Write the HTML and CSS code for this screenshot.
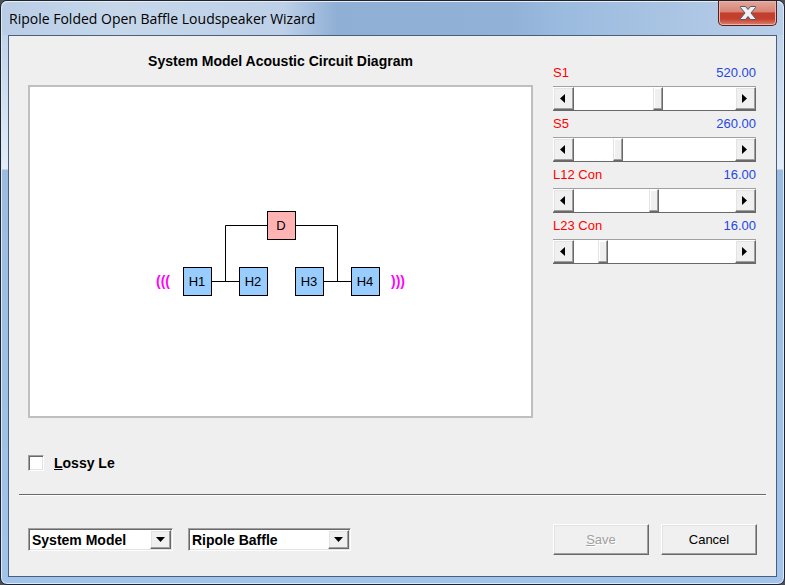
FILE: index.html
```html
<!DOCTYPE html>
<html lang="en">
<head>
  <meta charset="UTF-8">
  <title>Ripole Folded Open Baffle Loudspeaker Wizard</title>
  <link rel="stylesheet" href="styles.css">
</head>
<body>
  <div class="window">
    <header class="titlebar">
      <h1 class="title">Ripole Folded Open Baffle Loudspeaker Wizard</h1>
      <button class="close" type="button" aria-label="Close">
        <svg width="16" height="14" viewBox="0 0 16 14">
          <path d="M.5.5h5L8 3.500 10.500.5h5v1L11 7l4.500 5.500v1h-5L8 10.500l-2.500 3h-5v-1L5 7 .5 1.500z" fill="#f0f0f0" stroke="#54586b"/>
        </svg>
      </button>
    </header>
    <form class="client">
      <div class="main">
        <section class="model">
          <h2 class="heading">System Model Acoustic Circuit Diagram</h2>
          <div class="diagram">
            <svg class="circuit" width="262" height="88" viewBox="0 0 262 88">
              <path class="wire" d="M61.500 73.500h28M173.500 73.500h28M75.500 73.500v-56h42M145.500 17.500h42v56"/>
              <rect class="driver" x="117.500" y="3.500" width="28" height="28"/>
              <rect class="horn" x="33.500" y="59.500" width="28" height="28"/>
              <rect class="horn" x="89.500" y="59.500" width="28" height="28"/>
              <rect class="horn" x="145.500" y="59.500" width="28" height="28"/>
              <rect class="horn" x="201.500" y="59.500" width="28" height="28"/>
              <text x="131" y="22">D</text>
              <text x="47" y="78">H1</text>
              <text x="103" y="78">H2</text>
              <text x="159" y="78">H3</text>
              <text x="215" y="78">H4</text>
              <text class="wave" x="13" y="78">(((</text>
              <text class="wave" x="248" y="78">)))</text>
            </svg>
          </div>
        </section>
        <section class="params">
          <div class="param">
            <label class="name" for="s1">S1</label>
            <output class="value" for="s1">520.00</output>
            <div class="scrollbar">
              <button class="step" type="button" aria-label="Decrease S1"><svg width="5" height="9" viewBox="0 0 5 9"><path d="M5 0v9L0 4.500z"/></svg></button>
              <input class="range" type="range" id="s1" min="0" max="1000" value="520">
              <button class="step" type="button" aria-label="Increase S1"><svg width="5" height="9" viewBox="0 0 5 9"><path d="M0 0v9l5-4.500z"/></svg></button>
            </div>
          </div>
          <div class="param">
            <label class="name" for="s5">S5</label>
            <output class="value" for="s5">260.00</output>
            <div class="scrollbar">
              <button class="step" type="button" aria-label="Decrease S5"><svg width="5" height="9" viewBox="0 0 5 9"><path d="M5 0v9L0 4.500z"/></svg></button>
              <input class="range" type="range" id="s5" min="0" max="1000" value="260">
              <button class="step" type="button" aria-label="Increase S5"><svg width="5" height="9" viewBox="0 0 5 9"><path d="M0 0v9l5-4.500z"/></svg></button>
            </div>
          </div>
          <div class="param">
            <label class="name" for="l12">L12 Con</label>
            <output class="value" for="l12">16.00</output>
            <div class="scrollbar">
              <button class="step" type="button" aria-label="Decrease L12"><svg width="5" height="9" viewBox="0 0 5 9"><path d="M5 0v9L0 4.500z"/></svg></button>
              <input class="range" type="range" id="l12" min="0" max="1000" value="495">
              <button class="step" type="button" aria-label="Increase L12"><svg width="5" height="9" viewBox="0 0 5 9"><path d="M0 0v9l5-4.500z"/></svg></button>
            </div>
          </div>
          <div class="param">
            <label class="name" for="l23">L23 Con</label>
            <output class="value" for="l23">16.00</output>
            <div class="scrollbar">
              <button class="step" type="button" aria-label="Decrease L23"><svg width="5" height="9" viewBox="0 0 5 9"><path d="M5 0v9L0 4.500z"/></svg></button>
              <input class="range" type="range" id="l23" min="0" max="1000" value="160">
              <button class="step" type="button" aria-label="Increase L23"><svg width="5" height="9" viewBox="0 0 5 9"><path d="M0 0v9l5-4.500z"/></svg></button>
            </div>
          </div>
        </section>
      </div>
      <div class="options">
        <input class="check" type="checkbox" id="lossy">
        <label for="lossy"><u>L</u>ossy Le</label>
      </div>
      <hr class="divider">
      <footer class="footer">
        <div class="combo combo-view">
          <select class="select" aria-label="View">
            <option>System Model</option>
          </select>
          <span class="arrow"><svg width="9" height="5" viewBox="0 0 9 5"><path d="M0 0h9L4.500 5z"/></svg></span>
        </div>
        <div class="combo combo-type">
          <select class="select" aria-label="Baffle type">
            <option>Ripole Baffle</option>
          </select>
          <span class="arrow"><svg width="9" height="5" viewBox="0 0 9 5"><path d="M0 0h9L4.500 5z"/></svg></span>
        </div>
        <div class="actions">
          <button class="btn" type="submit" disabled><span><u>S</u>ave</span></button>
          <button class="btn" type="button">Cancel</button>
        </div>
      </footer>
    </form>
  </div>
</body>
</html>
```
FILE: styles.css
```css
* {
  box-sizing: border-box;
}

body {
  margin: 0;
  background: #4b4f55;
  font-family: "Liberation Sans", Arial, sans-serif;
  font-size: 14px;
  line-height: 18px;
  color: #000;
}

button, input, select {
  margin: 0;
  padding: 0;
  font: inherit;
  color: inherit;
}

.window {
  display: flex;
  flex-direction: column;
  min-height: 100vh;
  padding: 0 7px 7px;
  border: 1px solid #20232c;
  border-radius: 7px;
  background: linear-gradient(#b9cee7, #c6d8ed 60px, #e3edf8 168px, #9bbce0 169px, #a3c4ea);
  box-shadow: inset 0 0 0 1px #dcebf9;
}

.titlebar {
  display: flex;
  justify-content: space-between;
  align-items: flex-start;
  height: 34px;
  margin: 0 -6px;
  padding: 0 6px 0 7px;
  border-radius: 6px 6px 0 0;
  background: linear-gradient(90deg, #b9cde6, #c6d7ea 15%, #bdd0e7 36%, #8fafd5 43%, #91b1d7 65%, #9bbbdf 72%, #b9cee7);
  box-shadow: inset 0 1px 0 #e4effa;
}

.title {
  margin: 0;
  font: 14px/36px "Open Sans", "Noto Sans", sans-serif;
}

.close {
  display: flex;
  justify-content: center;
  align-items: center;
  width: 59px;
  height: 25px;
  border: 1px solid #5b1c1c;
  border-top: 0;
  border-radius: 0 0 5px 5px;
  background: linear-gradient(#e3a79c, #d88375 45%, #c23f2d 50%, #c5402e 75%, #d9826f);
  box-shadow: inset 0 0 0 1px #e9b5ac;
}

.client {
  display: flex;
  flex: 1;
  flex-direction: column;
  padding: 16px 19px 21px;
  border: 1px solid #4a5f7c;
  background: #efefef;
}

.main {
  display: flex;
  flex: 1;
  gap: 20px;
}

.model {
  display: flex;
  flex: 1;
  flex-direction: column;
}

.heading {
  margin: 0 0 15px;
  font-size: 14px;
  line-height: 18px;
  text-align: center;
}

.diagram {
  display: flex;
  flex: 1;
  justify-content: center;
  align-items: center;
  border: 2px solid #bfbfbf;
  background: #fff;
}

.circuit {
  font-size: 13px;
  text-anchor: middle;
}

.wire {
  fill: none;
  stroke: #000;
}

.driver {
  fill: #ffb3b3;
  stroke: #000;
}

.horn {
  fill: #99ccff;
  stroke: #000;
}

.wave {
  fill: #f0f;
  font-size: 14px;
  font-weight: bold;
}

.params {
  width: 204px;
  padding: 12px 1px 0 0;
}

.param {
  display: flex;
  flex-wrap: wrap;
  justify-content: space-between;
  margin-bottom: 4px;
  font-size: 13px;
}

.name {
  color: #f00;
}

.value {
  color: #1f47e6;
}

.scrollbar {
  display: flex;
  width: 100%;
  height: 25px;
  margin-top: 4px;
  border: 1px solid #a0a0a0;
  border-width: 1px 0;
  border-bottom-color: #696969;
}

.step, .arrow, .btn {
  display: flex;
  justify-content: center;
  align-items: center;
  border: 1px solid #696969;
  border-top-color: #fff;
  border-left-color: #fff;
  background: #f0f0f0;
  box-shadow: inset -1px -1px #a0a0a0, inset 1px 1px #e3e3e3;
}

.step {
  width: 21px;
  padding-right: 2px;
}

.range {
  flex: 1;
  min-width: 0;
  height: 23px;
  background: #fff;
  appearance: none;
}

.range::-webkit-slider-thumb {
  width: 10px;
  height: 23px;
  border: 1px solid #696969;
  border-top-color: #fff;
  border-left-color: #e3e3e3;
  background: #f0f0f0;
  box-shadow: inset -1px -1px #a0a0a0, inset 1px 1px #fff;
  appearance: none;
}

.options {
  display: flex;
  align-items: center;
  gap: 10px;
  margin-top: 36px;
  font-weight: bold;
}

.check, .combo {
  border: 1px solid #a0a0a0;
  border-right-color: #fff;
  border-bottom-color: #fff;
  background: #fff;
  box-shadow: inset 1px 1px #696969, inset -1px -1px #e3e3e3;
}

.check {
  width: 16px;
  height: 16px;
  appearance: none;
}

.divider {
  height: 2px;
  margin: 22px -9px 28px;
  border: 0;
  border-top: 1px solid #696969;
  background: #fff;
}

.footer {
  display: flex;
  align-items: center;
  gap: 15px;
}

.combo {
  display: grid;
  grid-template-columns: 1fr 21px;
  height: 23px;
  padding: 1px;
}

.combo-view {
  width: 145px;
}

.combo-type {
  width: 163px;
}

.select {
  grid-area: 1 / 1 / 2 / 3;
  padding-left: 2px;
  border: 0;
  background: none;
  font-weight: bold;
  appearance: none;
}

.arrow {
  grid-area: 1 / 2;
  pointer-events: none;
}

.actions {
  display: flex;
  gap: 12px;
  margin-left: auto;
}

.btn {
  width: 96px;
  height: 31px;
  font-size: 13px;
}

.btn:disabled {
  color: #a0a0a0;
  text-shadow: 1px 1px #fff;
}
```
